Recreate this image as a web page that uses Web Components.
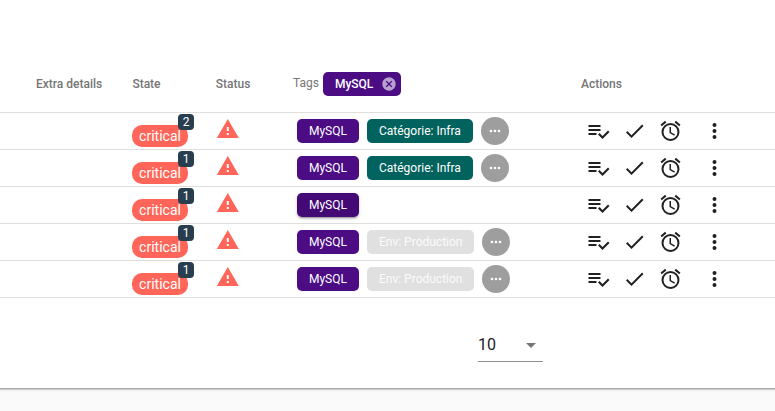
<!DOCTYPE html>
<html lang="en">
<head>
<meta charset="utf-8">
<title>Alerts</title>
<style>
body{margin:0;background:#fafafa;font-family:Roboto,sans-serif;overflow:hidden}
</style>
</head>
<body>
<alert-table></alert-table>
<script>
const ICONS = {
  alert: 'M13,14H11V10H13M13,18H11V16H13M1,21H23L12,2L1,21Z',
  playlist: 'M14,10H2V12H14V10M14,6H2V8H14V6M2,16H10V14H2V16M21.5,11.5L23,13L16,20L11.5,15.5L13,14L16,17L21.5,11.5Z',
  check: 'M21,7L9,19L3.5,13.5L4.91,12.09L9,16.17L19.59,5.59L21,7Z',
  alarm: 'M12,20A7,7 0 0,1 5,13A7,7 0 0,1 12,6A7,7 0 0,1 19,13A7,7 0 0,1 12,20M12,4A9,9 0 0,0 3,13A9,9 0 0,0 12,22A9,9 0 0,0 21,13A9,9 0 0,0 12,4M12.5,8H11V14L15.75,16.85L16.5,15.62L12.5,13.25V8M7.88,3.39L6.6,1.86L2,5.71L3.29,7.24L7.88,3.39M22,5.72L17.4,1.86L16.11,3.39L20.71,7.25L22,5.72Z',
  dotsV: 'M12,16A2,2 0 0,1 14,18A2,2 0 0,1 12,20A2,2 0 0,1 10,18A2,2 0 0,1 12,16M12,10A2,2 0 0,1 14,12A2,2 0 0,1 12,14A2,2 0 0,1 10,12A2,2 0 0,1 12,10M12,4A2,2 0 0,1 14,6A2,2 0 0,1 12,8A2,2 0 0,1 10,6A2,2 0 0,1 12,4Z',
  dotsH: 'M16,12A2,2 0 0,1 18,10A2,2 0 0,1 20,12A2,2 0 0,1 18,14A2,2 0 0,1 16,12M10,12A2,2 0 0,1 12,10A2,2 0 0,1 14,12A2,2 0 0,1 12,14A2,2 0 0,1 10,12M4,12A2,2 0 0,1 6,10A2,2 0 0,1 8,12A2,2 0 0,1 6,14A2,2 0 0,1 4,12Z',
  close: 'M12,2C17.53,2 22,6.47 22,12C22,17.53 17.53,22 12,22C6.47,22 2,17.53 2,12C2,6.47 6.47,2 12,2M15.59,7L12,10.59L8.41,7L7,8.41L10.59,12L7,15.59L8.41,17L12,13.41L15.59,17L17,15.59L13.41,12L17,8.41L15.59,7Z',
  down: 'M7,10L12,15L17,10H7Z'
};
const define = (name, render) => customElements.define(name, class extends HTMLElement {
  connectedCallback() {
    if (!this.shadowRoot) this.attachShadow({mode: 'open'}).innerHTML = render(this);
  }
});

// "nudge" shifts the glyph by a fraction of a pixel inside its box.
define('md-icon', el => {
  const s = el.getAttribute('size') || 24;
  const n = -(el.getAttribute('nudge') || 0);
  return `<style>:host{display:block;flex:none;width:${s}px;height:${s}px}svg{display:block;overflow:visible}</style>
  <svg width="${s}" height="${s}" viewBox="${n} 0 24 24" fill="currentColor"><path d="${ICONS[el.getAttribute('name')]}"/></svg>`;
});

define('tag-chip', () => `<style>
  :host{display:flex;align-items:center;box-sizing:border-box;height:24px;padding:0 12px;border-radius:5px;
    background:#4b0c84;color:#fff;font-size:12px;line-height:24px;white-space:nowrap;width:var(--w,62px);flex:none}
  :host([tone=teal]){background:#02625e}
  :host([tone=grey]){background:#e0e0e0;color:#fbfbfb}
  :host([raised]){background:#430a76;box-shadow:0 3px 1px -2px rgba(0,0,0,.2),0 2px 2px rgba(0,0,0,.14),0 1px 5px rgba(0,0,0,.12)}
  :host([removable]){font-weight:500;padding-right:4px;justify-content:space-between}
  </style><slot></slot>`);

define('more-button', () => `<style>
  :host{display:grid;place-items:center;width:28px;height:28px;border-radius:50%;background:#9e9e9e;color:#fff;flex:none}
  </style><md-icon name="dotsH" size="16"></md-icon>`);

define('state-chip', el => `<style>
  :host{display:block;position:relative;box-sizing:border-box;width:56px;height:22px;border-radius:10px;background:#ff6659;color:#fff;
    font-size:14px;line-height:22px;text-align:center}
  .count{position:absolute;right:-6px;top:-11px;width:16px;height:16px;border-radius:4px;background:#283e4f;font-size:12px;line-height:16px}
  </style><slot></slot><span class="count">${el.getAttribute('count')}</span>`);

const COLS = 'grid-template-columns:96.4px 83.4px 77.2px 288px 1fr;padding-left:36px;';

define('alert-row', () => `<style>
  :host{display:grid;${COLS}align-items:center;height:36px;border-bottom:1px solid #dedede}
  .state{padding-top:9px;margin-left:-.4px}
  .status{color:#ff6659;padding-bottom:5px}
  .tags,.actions{display:flex;align-items:center}
  .tags{gap:8px;padding-left:4px}
  .actions{gap:12px;color:#212121;padding-left:5px}
  .last{margin-left:8px}
  </style>
  <span></span><div class="state"><slot name="state"></slot></div>
  <div class="status"><md-icon name="alert" nudge="-0.2"></md-icon></div>
  <div class="tags"><slot></slot></div>
  <div class="actions"><md-icon name="playlist" nudge="0.5"></md-icon><md-icon name="check" nudge="0.5"></md-icon><md-icon name="alarm" nudge="0.5"></md-icon><md-icon class="last" name="dotsV" nudge="0.5"></md-icon></div>`);

define('alert-header', () => `<style>
  :host{display:grid;${COLS}align-items:center;height:57px;padding-top:55px;border-bottom:1px solid #dedede;
    color:#757575;font-size:12px;font-weight:500;line-height:16px;white-space:nowrap}
  .tags{display:flex;align-items:center;gap:4px}
  .label{font-weight:400;padding-bottom:2px;width:26px}
  md-icon{color:#b79fce}
  </style>
  <span>Extra details</span><span>State</span><span>Status</span>
  <div class="tags"><span class="label">Tags</span><tag-chip removable style="--w:78px">MySQL<md-icon name="close" size="16"></md-icon></tag-chip></div>
  <span>Actions</span>`);

define('page-size', () => `<style>
  :host{display:flex;align-items:center;justify-content:space-between;box-sizing:border-box;width:65px;height:33px;
    border-bottom:1px solid #8f8f8f;font-size:16px;color:#212121}
  span{padding-bottom:2px}
  md-icon{color:#757575}
  </style><span><slot></slot></span><md-icon name="down"></md-icon>`);

define('alert-table', () => {
  const infra = '<tag-chip>MySQL</tag-chip><tag-chip tone="teal" style="--w:106px">Catégorie: Infra</tag-chip><more-button></more-button>';
  const prod = '<tag-chip>MySQL</tag-chip><tag-chip tone="grey" style="--w:107px">Env: Production</tag-chip><more-button></more-button>';
  const rows = [[2, infra], [1, infra], [1, '<tag-chip raised>MySQL</tag-chip>'], [1, prod], [1, prod]];
  return `<style>
  :host{display:block}
  .card{box-sizing:border-box;height:389px;background:#fff;border-bottom:1px solid #a8a8a8}
  .shade{height:3px;background:linear-gradient(#cfcfcf 0 1px,#f1f1f1 1px 2px,#f8f8f8 2px)}
  page-size{margin:31px 0 0 478px}
  </style><div class="card"><alert-header></alert-header>
  ${rows.map(([n, tags]) => `<alert-row><state-chip slot="state" count="${n}">critical</state-chip>${tags}</alert-row>`).join('')}
  <page-size>10</page-size></div><div class="shade"></div>`;
});
</script>
</body>
</html>
